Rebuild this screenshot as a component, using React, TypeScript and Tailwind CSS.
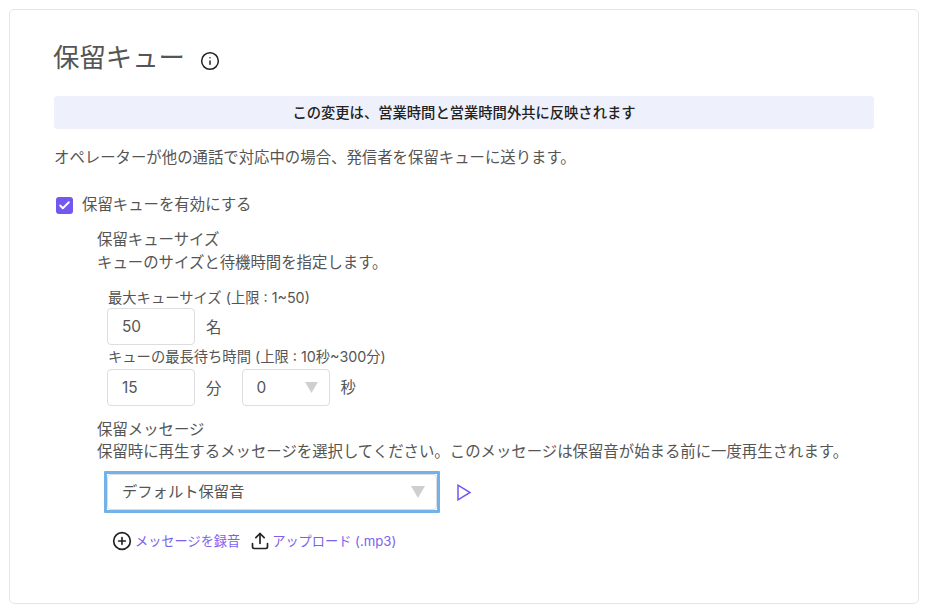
/**
 * Hold queue settings card
 */
import { Info, Check, CirclePlus, Upload } from 'lucide-react';

const Arrow = ({ className }: { className: string }) => (
  <svg viewBox="0 0 14 12" className={className}>
    <path d="M0 0H14L7 12Z" fill="#cfcfcf" />
  </svg>
);

export default function App() {
  return (
    <div className="h-[612px] w-[925px] overflow-hidden bg-white pl-[9px] pt-[9px] font-['Inter','Noto_Sans_CJK_JP',sans-serif] text-[15.4px] leading-[20px] text-[#555]">
      <div className="h-[595px] w-[910px] rounded-[5px] border border-[#e6e6e6] pl-[44px] pr-[44px] pt-[29px]">
        <div className="flex h-[36px] items-center">
          <h1 className="-ml-[1px] text-[26.4px] leading-[36px] font-normal text-[#555]">保留キュー</h1>
          <Info className="ml-[15px] mt-[7px] h-[20px] w-[20px] text-[#222]" strokeWidth={1.8} />
        </div>
        <div className="mt-[21px] flex h-[33px] items-center justify-center rounded-[4px] bg-[#eef0fb] text-[14.3px] font-medium text-[#222]">
          この変更は、営業時間と営業時間外共に反映されます
        </div>
        <p className="mt-[19px] h-[20px]">オペレーターが他の通話で対応中の場合、発信者を保留キューに送ります。</p>
        <label className="mt-[27px] flex h-[20px] items-center pl-[2px]">
          <span className="flex h-[17px] w-[17px] items-center justify-center rounded-[3px] bg-[#7357ee]">
            <Check className="h-[13px] w-[13px] text-white" strokeWidth={3.5} />
          </span>
          <span className="ml-[9px]">保留キューを有効にする</span>
        </label>
        <div className="ml-[43px]">
          <div className="mt-[15px]">保留キューサイズ</div>
          <div className="mt-[3px]">キューのサイズと待機時間を指定します。</div>
          <div className="ml-[11px] mt-[16px] text-[14.3px] leading-[18px]">最大キューサイズ (上限 : 1~50)</div>
          <div className="ml-[10px] mt-[1px] flex items-center">
            <div className="flex h-[37px] w-[88px] items-center rounded-[4px] border border-[#ddd] pl-[14px]">50</div>
            <span className="ml-[11px] mt-[2px]">名</span>
          </div>
          <div className="ml-[11px] mt-[3px] text-[14.3px] leading-[18px]">キューの最長待ち時間 (上限 : 10秒~300分)</div>
          <div className="ml-[10px] mt-[3px] flex items-center">
            <div className="flex h-[37px] w-[88px] items-center rounded-[4px] border border-[#ddd] pl-[14px]">15</div>
            <span className="ml-[11px] mt-[2px]">分</span>
            <div className="ml-[21px] flex h-[37px] w-[88px] items-center justify-between rounded-[4px] border border-[#ddd] pl-[13px] pr-[11px]">
              0
              <Arrow className="h-[11px] w-[13px]" />
            </div>
            <span className="ml-[10px]">秒</span>
          </div>
          <div className="mt-[14px]">保留メッセージ</div>
          <div className="mt-[2px] whitespace-nowrap">保留時に再生するメッセージを選択してください。このメッセージは保留音が始まる前に一度再生されます。</div>
          <div className="ml-[7px] mt-[9px] flex items-center">
            <div className="flex h-[42px] w-[336px] items-center justify-between rounded-[1px] border-[3px] border-[#72b2e8] bg-white">
              <div className="flex h-[36px] w-full items-center justify-between rounded-[4px] border border-[#ddd] pl-[14px] pr-[11px] text-[15.3px]">
                デフォルト保留音
                <Arrow className="h-[12px] w-[14px]" />
              </div>
            </div>
            <svg viewBox="0 0 14 17" className="ml-[17px] h-[17px] w-[14px]" fill="none" stroke="#7357ee" strokeWidth="1.5">
              <path d="M1 1.2V15.8L13 8.5Z" />
            </svg>
          </div>
          <div className="ml-[15px] mt-[17px] flex items-center text-[13.2px] text-[#7a62ee]">
            <CirclePlus className="h-[20px] w-[20px] text-[#222]" strokeWidth={2} />
            <span className="ml-[3px]">メッセージを録音</span>
            <Upload className="ml-[10px] mt-[1px] h-[20px] w-[20px] text-[#222]" strokeWidth={2} />
            <span className="ml-[2px]">アップロード (.mp3)</span>
          </div>
        </div>
      </div>
    </div>
  );
}
